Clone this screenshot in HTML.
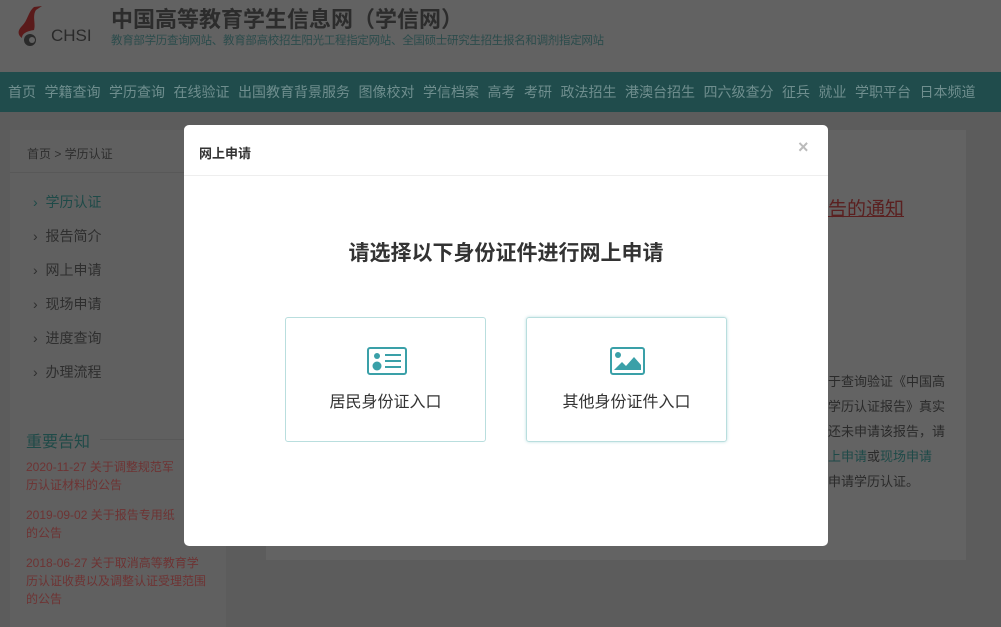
<!DOCTYPE html>
<html><head><meta charset="utf-8">
<style>
*{margin:0;padding:0;box-sizing:border-box}
body{width:1001px;height:627px;overflow:hidden;background:#5c5c5c;font-family:"Liberation Sans","Noto Sans CJK SC",sans-serif;position:relative}
.abs{position:absolute;white-space:nowrap}
.hdr{left:0;top:0;width:1001px;height:72px;background:#626262}
.nav{left:0;top:72px;width:1001px;height:40px;background:#204c4c;color:#6f8e8e;font-size:14px;line-height:40px;padding-left:8px;word-spacing:0}
.nav span{margin-right:8.5px}
.side{left:10px;top:130px;width:216px;height:497px;background:#606060}
.main{left:266px;top:130px;width:700px;height:430px;background:#636363}
.menu{font-size:14px;color:#2e2e2e}
.red{color:#6e3333;font-size:12px;line-height:18px}
.modal{left:184px;top:125px;width:644px;height:421px;background:#fff;border-radius:5px}
.card{position:absolute;top:192px;width:201px;height:125px;border:1px solid #b9dede;border-radius:3px;text-align:center}
.card .t{position:absolute;left:0;right:0;top:70px;font-size:16px;color:#333}
</style></head><body>
<div class="abs hdr"></div>
<svg class="abs" style="left:14px;top:4px" width="30" height="44" viewBox="0 0 30 44"><path d="M28 2 L20 3 C14 8 14 16 8 22 C3 27 4 31 8 34 C8 29 14 27 20 26 C22 20 18 12 22 6 Z" fill="#5a1a1a"/><circle cx="16" cy="36" r="6" fill="#2a2a2a"/><circle cx="18" cy="36" r="3" fill="#626262"/></svg>
<div class="abs" style="left:51px;top:26px;font-size:17px;color:#2a2a2a">CHSI</div>
<div class="abs" style="left:111px;top:2px;font-size:22px;font-weight:bold;color:#2c2c2c">中国高等教育学生信息网（学信网）</div>
<div class="abs" style="left:111px;top:32px;font-size:11.5px;color:#2c4c4c;letter-spacing:-0.3px">教育部学历查询网站、教育部高校招生阳光工程指定网站、全国硕士研究生招生报名和调剂指定网站</div>
<div class="abs nav"><span>首页</span><span>学籍查询</span><span>学历查询</span><span>在线验证</span><span>出国教育背景服务</span><span>图像校对</span><span>学信档案</span><span>高考</span><span>考研</span><span>政法招生</span><span>港澳台招生</span><span>四六级查分</span><span>征兵</span><span>就业</span><span>学职平台</span><span>日本频道</span></div>
<div class="abs side"></div>
<div class="abs main"></div>
<div class="abs" style="left:10px;top:172px;width:216px;height:1px;background:#585858"></div>
<div class="abs" style="left:27px;top:145px;font-size:12px;color:#2e2e2e">首页 &gt; 学历认证</div>
<div class="abs menu" style="left:33px;top:192px;color:#1e4a48">›&nbsp; 学历认证</div>
<div class="abs menu" style="left:33px;top:226px">›&nbsp; 报告简介</div>
<div class="abs menu" style="left:33px;top:260px">›&nbsp; 网上申请</div>
<div class="abs menu" style="left:33px;top:294px">›&nbsp; 现场申请</div>
<div class="abs menu" style="left:33px;top:328px">›&nbsp; 进度查询</div>
<div class="abs menu" style="left:33px;top:362px">›&nbsp; 办理流程</div>
<div class="abs" style="left:26px;top:428px;font-size:16px;color:#1f4a48">重要告知</div>
<div class="abs" style="left:100px;top:439px;width:120px;height:1px;background:#585858"></div>
<div class="abs red" style="left:26px;top:458px">2020-11-27 关于调整规范军<br>历认证材料的公告</div>
<div class="abs red" style="left:26px;top:506px">2019-09-02 关于报告专用纸<br>的公告</div>
<div class="abs red" style="left:26px;top:554px">2018-06-27 关于取消高等教育学<br>历认证收费以及调整认证受理范围<br>的公告</div>
<div class="abs" style="left:828px;top:194px;font-size:19px;color:#5a2020;text-decoration:underline">告的通知</div>
<div class="abs" style="left:828px;top:369px;font-size:13px;line-height:25px;color:#2a2a2a">于查询验证《中国高<br>学历认证报告》真实<br>还未申请该报告，请<br><span style="color:#1e4a48">上申请</span>或<span style="color:#1e4a48">现场申请</span><br>申请学历认证。</div>
<div class="abs modal">
  <div class="abs" style="left:15px;top:18px;font-size:13px;font-weight:bold;color:#333">网上申请</div>
  <div class="abs" style="left:614px;top:12px;font-size:18px;color:#bbb;font-weight:bold">×</div>
  <div class="abs" style="left:0;top:50px;width:644px;height:1px;background:#eee"></div>
  <div class="abs" style="left:0;right:0;top:112px;text-align:center;font-size:21px;font-weight:bold;color:#333">请选择以下身份证件进行网上申请</div>
  <div class="card" style="left:101px">
    <svg style="position:absolute;left:81px;top:29px" width="40" height="28" viewBox="0 0 40 28"><rect x="1" y="1" width="38" height="26" rx="2" fill="none" stroke="#3aa0a8" stroke-width="2"/><circle cx="10" cy="9" r="3" fill="#3aa0a8"/><circle cx="10" cy="19" r="4.5" fill="#3aa0a8"/><path d="M18 8H34M18 14H34M18 20H34" stroke="#3aa0a8" stroke-width="2"/></svg>
    <div class="t">居民身份证入口</div>
  </div>
  <div class="card" style="left:342px;box-shadow:0 0 3px #bfe0e2">
    <svg style="position:absolute;left:83px;top:29px" width="35" height="28" viewBox="0 0 35 28"><rect x="1" y="1" width="33" height="26" rx="2" fill="none" stroke="#3aa0a8" stroke-width="2"/><circle cx="8" cy="8" r="3" fill="#3aa0a8"/><path d="M4 23 L12 15 L16 19 L24 10 L31 18 V23 Z" fill="#3aa0a8"/></svg>
    <div class="t">其他身份证件入口</div>
  </div>
</div>
</body></html>
